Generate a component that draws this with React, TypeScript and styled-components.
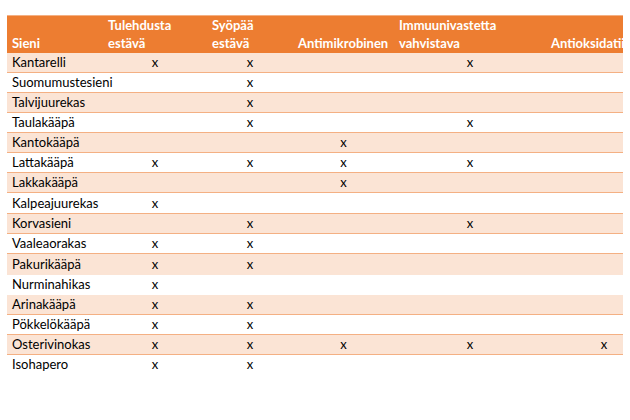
import React from "react";
import styled, { createGlobalStyle } from "styled-components";

const Global = createGlobalStyle`
  html, body { margin: 0; padding: 0; background: #ffffff; }
  body { font-family: "Lato", "Liberation Sans", sans-serif; }
`;

const COLS = "96px 104px 86px 101px 152px 116px";

const Page = styled.div`
  padding: 15px 0 0 7px;
  width: 616px;
`;

const Clip = styled.div`
  width: 616px;
  overflow: hidden;
`;

const Table = styled.div`
  width: 655px;
  display: flex;
  flex-direction: column;
`;

const HeaderRow = styled.div`
  display: grid;
  grid-template-columns: ${COLS};
  height: 38px;
  background: #ed7d31;
  border-top: 1px solid #f4b083;
  box-sizing: border-box;
`;

const HeadCell = styled.div`
  display: flex;
  align-items: flex-end;
  padding: 0 0 1px 5px;
  color: #ffffff;
  font-weight: 700;
  font-size: 13px;
  line-height: 18px;
  white-space: pre;
  overflow: hidden;
`;

const Row = styled.div<{ $shade: boolean; $ruled: boolean; $tall: boolean }>`
  display: grid;
  grid-template-columns: ${COLS};
  align-items: center;
  height: ${(p) => (p.$tall ? 21 : 20)}px;
  box-sizing: border-box;
  background: ${(p) => (p.$shade ? "#fbe4d5" : "#ffffff")};
  border-left: 1px solid #f4b083;
  border-bottom: 1px solid ${(p) => (p.$ruled ? "#f4b083" : "transparent")};
  margin-left: -1px;
`;

const NameCell = styled.div`
  padding-left: 5px;
  font-size: 13px;
  line-height: 19px;
  color: #000000;
  white-space: nowrap;
`;

const MarkCell = styled.div`
  text-align: center;
  font-size: 13px;
  line-height: 19px;
  color: #000000;
`;

type Data = { name: string; marks: number[]; ruled?: boolean; tall?: boolean };

const rows: Data[] = [
  { name: "Kantarelli", marks: [1, 2, 4] },
  { name: "Suomumustesieni", marks: [2] },
  { name: "Talvijuurekas", marks: [2] },
  { name: "Taulakääpä", marks: [2, 4] },
  { name: "Kantokääpä", marks: [3] },
  { name: "Lattakääpä", marks: [1, 2, 3, 4] },
  { name: "Lakkakääpä", marks: [3] },
  { name: "Kalpeajuurekas", marks: [1], tall: true },
  { name: "Korvasieni", marks: [2, 4] },
  { name: "Vaaleaorakas", marks: [1, 2] },
  { name: "Pakurikääpä", marks: [1, 2], ruled: false, tall: true },
  { name: "Nurminahikas", marks: [1], ruled: false },
  { name: "Arinakääpä", marks: [1, 2] },
  { name: "Pökkelökääpä", marks: [1, 2] },
  { name: "Osterivinokas", marks: [1, 2, 3, 4, 5] },
  { name: "Isohapero", marks: [1, 2], ruled: false },
];

const headers = [
  "Sieni",
  "Tulehdusta\nestävä",
  "Syöpää\nestävä",
  "Antimikrobinen",
  "Immuunivastetta\nvahvistava",
  "Antioksidatiivinen",
];

export default function App() {
  return (
    <Page>
      <Global />
      <Clip>
        <Table>
          <HeaderRow>
            {headers.map((h) => (
              <HeadCell key={h}>{h}</HeadCell>
            ))}
          </HeaderRow>
          {rows.map((r, i) => (
            <Row
              key={r.name}
              $shade={i % 2 === 0}
              $ruled={r.ruled !== false}
              $tall={!!r.tall}
            >
              <NameCell>{r.name}</NameCell>
              {[1, 2, 3, 4, 5].map((c) => (
                <MarkCell key={c}>{r.marks.includes(c) ? "x" : ""}</MarkCell>
              ))}
            </Row>
          ))}
        </Table>
      </Clip>
    </Page>
  );
}
